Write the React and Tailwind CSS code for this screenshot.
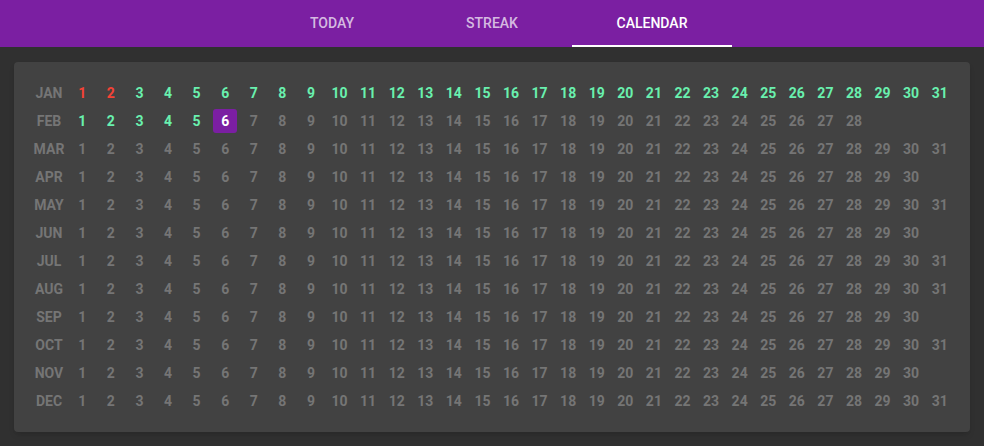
import React from "react";

const MONTHS = [
  ["JAN", 31],
  ["FEB", 28],
  ["MAR", 31],
  ["APR", 30],
  ["MAY", 31],
  ["JUN", 30],
  ["JUL", 31],
  ["AUG", 31],
  ["SEP", 30],
  ["OCT", 31],
  ["NOV", 30],
  ["DEC", 31],
];

const TABS = ["TODAY", "STREAK", "CALENDAR"];

const dayStyle = (m, d) => {
  if (m === 0 && d <= 2) return "text-[#f44336]";
  if (m === 0 || (m === 1 && d <= 5)) return "text-[#69f0ae]";
  return "text-[#757575]";
};

const App = () => {
  return (
    <div className="min-h-[446px] bg-[#303030] font-['Roboto',sans-serif]">
      <div className="h-[47px] bg-[#7b1fa2] flex justify-center">
        {TABS.map((tab) => (
          <div
            key={tab}
            className={`w-[160px] flex items-center justify-center text-sm font-medium border-b-2 ${
              tab === "CALENDAR" ? "text-white border-white" : "text-white/70 border-transparent"
            }`}
          >
            {tab}
          </div>
        ))}
      </div>

      <div className="px-[14px] pt-[15px] pb-[14px]">
        <div className="bg-[#424242] rounded shadow-md px-4 py-[17px]">
          {MONTHS.map(([name, days], m) => (
            <div key={name} className="grid grid-cols-[38px_repeat(31,1fr)] h-[28px] items-center text-sm font-bold">
              <div className="text-center text-[#757575]">{name}</div>
              {Array.from({ length: days }, (_, i) => i + 1).map((d) =>
                m === 1 && d === 6 ? (
                  <div key={d} className="flex justify-center">
                    <span className="w-6 h-6 rounded-[3px] bg-[#7b1fa2] text-white flex items-center justify-center">
                      {d}
                    </span>
                  </div>
                ) : (
                  <div key={d} className={`text-center ${dayStyle(m, d)}`}>
                    {d}
                  </div>
                )
              )}
            </div>
          ))}
        </div>
      </div>
    </div>
  );
};

export default App;
